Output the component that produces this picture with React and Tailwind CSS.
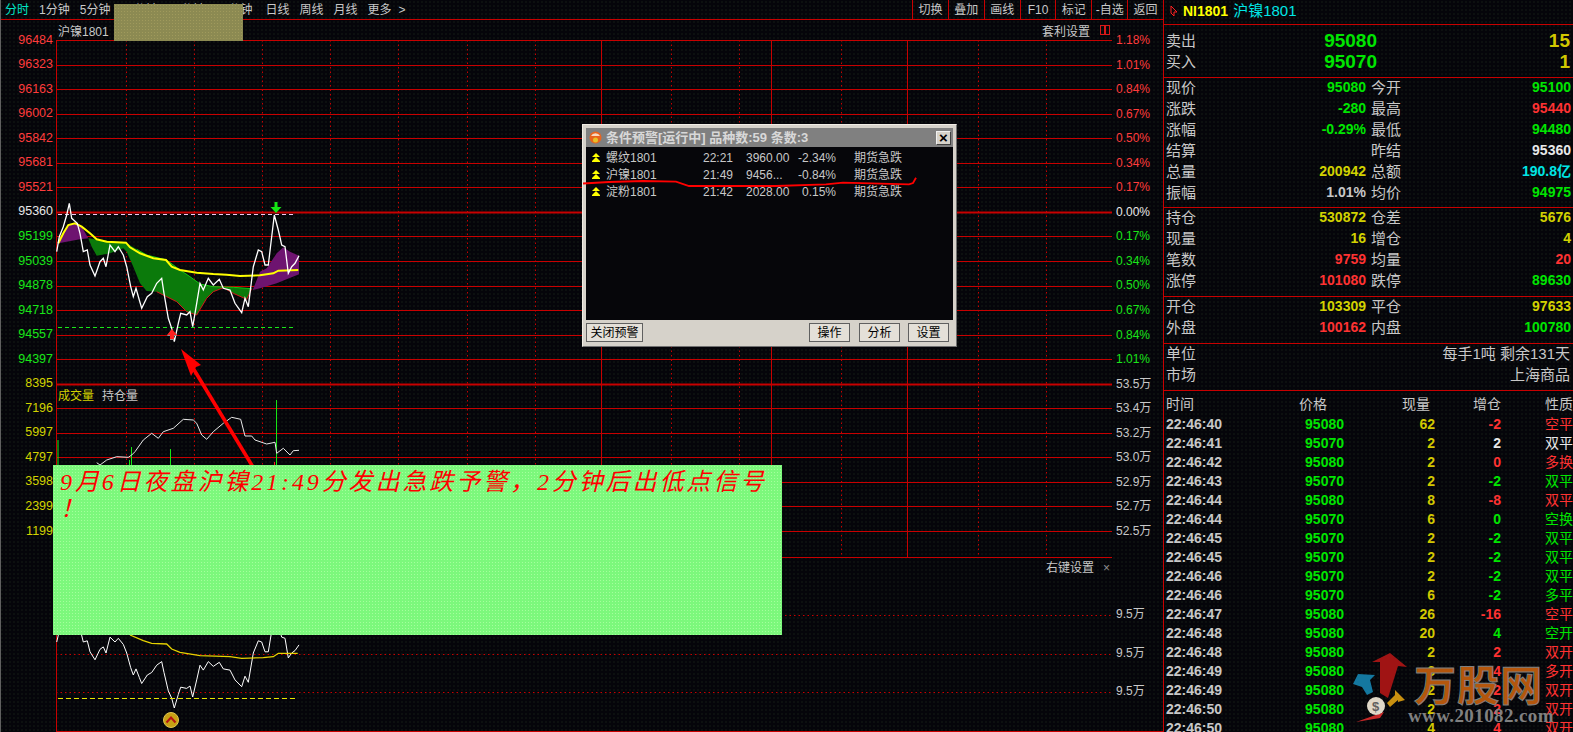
const RED = '#c80000';

const leftAxis = [
  ['96484', 'text-[#ff3c3c]'], ['96323', 'text-[#ff3c3c]'], ['96163', 'text-[#ff3c3c]'], ['96002', 'text-[#ff3c3c]'],
  ['95842', 'text-[#ff3c3c]'], ['95681', 'text-[#ff3c3c]'], ['95521', 'text-[#ff3c3c]'], ['95360', 'text-[#e8e8e8]'],
  ['95199', 'text-[#19e619]'], ['95039', 'text-[#19e619]'], ['94878', 'text-[#19e619]'], ['94718', 'text-[#19e619]'],
  ['94557', 'text-[#19e619]'], ['94397', 'text-[#19e619]'], ['8395', 'text-[#d2d200]'], ['7196', 'text-[#d2d200]'],
  ['5997', 'text-[#d2d200]'], ['4797', 'text-[#d2d200]'], ['3598', 'text-[#d2d200]'], ['2399', 'text-[#d2d200]'],
  ['1199', 'text-[#d2d200]'],
];

const rightAxis = [
  ['1.18%', 'text-[#ff3c3c]'], ['1.01%', 'text-[#ff3c3c]'], ['0.84%', 'text-[#ff3c3c]'], ['0.67%', 'text-[#ff3c3c]'],
  ['0.50%', 'text-[#ff3c3c]'], ['0.34%', 'text-[#ff3c3c]'], ['0.17%', 'text-[#ff3c3c]'], ['0.00%', 'text-[#e8e8e8]'],
  ['0.17%', 'text-[#19e619]'], ['0.34%', 'text-[#19e619]'], ['0.50%', 'text-[#19e619]'], ['0.67%', 'text-[#19e619]'],
  ['0.84%', 'text-[#19e619]'], ['1.01%', 'text-[#19e619]'], ['53.5万', 'text-[#c8c8c8]'], ['53.4万', 'text-[#c8c8c8]'],
  ['53.2万', 'text-[#c8c8c8]'], ['53.0万', 'text-[#c8c8c8]'], ['52.9万', 'text-[#c8c8c8]'], ['52.7万', 'text-[#c8c8c8]'],
  ['52.5万', 'text-[#c8c8c8]'],
];

const G = 'text-[#00e600]';
const R = 'text-[#ff3232]';
const Y = 'text-[#d2d200]';
const W = 'text-[#e8e8e8]';
const S = 'text-[#c8c8c8]';
const C = 'text-[#00e6e6]';

const quoteRows = [
  ['现价', '95080', G, '今开', '95100', G],
  ['涨跌', '-280', G, '最高', '95440', R],
  ['涨幅', '-0.29%', G, '最低', '94480', G],
  ['结算', '', S, '昨结', '95360', W],
  ['总量', '200942', Y, '总额', '190.8亿', C],
  ['振幅', '1.01%', S, '均价', '94975', G],
];
const holdRows = [
  ['持仓', '530872', Y, '仓差', '5676', Y],
  ['现量', '16', Y, '增仓', '4', Y],
  ['笔数', '9759', R, '均量', '20', R],
  ['涨停', '101080', R, '跌停', '89630', G],
];
const openRows = [
  ['开仓', '103309', Y, '平仓', '97633', Y],
  ['外盘', '100162', R, '内盘', '100780', G],
];

const ticks = [
  ['22:46:40', '95080', '62', '-2', '空平', R],
  ['22:46:41', '95070', '2', '2', '双平', W],
  ['22:46:42', '95080', '2', '0', '多换', R],
  ['22:46:43', '95070', '2', '-2', '双平', G],
  ['22:46:44', '95080', '8', '-8', '双平', R],
  ['22:46:44', '95070', '6', '0', '空换', G],
  ['22:46:45', '95070', '2', '-2', '双平', G],
  ['22:46:45', '95070', '2', '-2', '双平', G],
  ['22:46:46', '95070', '2', '-2', '双平', G],
  ['22:46:46', '95070', '6', '-2', '多平', G],
  ['22:46:47', '95080', '26', '-16', '空平', R],
  ['22:46:48', '95080', '20', '4', '空开', G],
  ['22:46:48', '95080', '2', '2', '双开', R],
  ['22:46:49', '95080', '6', '4', '多开', R],
  ['22:46:49', '95080', '2', '2', '双开', R],
  ['22:46:50', '95080', '2', '2', '双开', R],
  ['22:46:50', '95080', '4', '4', '双开', R],
];

const alerts = [
  ['螺纹1801', '22:21', '3960.00', '-2.34%'],
  ['沪镍1801', '21:49', '9456...', '-0.84%'],
  ['淀粉1801', '21:42', '2028.00', '0.15%'],
];

const dotted = [126, 194, 262, 330, 398, 467, 535, 671, 739, 841, 978, 1046];
const solid = [601, 771, 907];

// traced from the reference at 3x, x = px / 3, y = 190 + py / 3
const whitePts = [[170,185],[178,140],[190,110],[200,75],[208,40],[215,85],[232,100],[240,130],[250,185],[262,180],[270,225],[285,258],[300,215],[310,205],[318,230],[330,165],[345,185],[355,170],[370,195],[380,230],[392,290],[400,320],[408,295],[418,330],[425,355],[442,320],[455,310],[470,280],[485,265],[492,310],[505,385],[515,415],[523,455],[535,400],[542,370],[560,375],[570,365],[578,410],[590,340],[600,280],[610,300],[625,265],[640,285],[658,268],[670,295],[690,300],[705,340],[725,368],[735,325],[745,350],[760,230],[775,180],[785,185],[795,225],[805,225],[823,75],[835,120],[845,165],[855,170],[865,250],[875,230],[885,220],[897,197]];
const yellowPts = [[175,160],[190,130],[205,105],[225,100],[245,110],[270,130],[290,148],[320,155],[378,158],[390,172],[420,190],[460,205],[498,210],[515,230],[540,240],[590,248],[640,252],[680,254],[720,258],[780,256],[820,250],[835,242],[895,240]];
const greenArea = [[265,145],[300,150],[378,158],[410,178],[440,195],[500,210],[540,240],[570,260],[600,282],[640,290],[700,292],[755,296],[740,328],[700,310],[670,293],[640,305],[620,325],[590,375],[560,365],[530,335],[500,320],[470,305],[440,303],[420,280],[400,230],[380,185],[370,175],[330,190],[290,197],[275,170]];
const purpleLeft = [[175,160],[190,130],[205,105],[225,100],[245,110],[265,145],[240,148],[200,155]];
const purpleRight = [[758,300],[780,245],[800,235],[830,190],[850,172],[870,185],[897,197],[897,253],[830,280],[780,295]];
const volumePts = [[290,248],[300,255],[320,240],[350,230],[385,232],[395,225],[405,215],[430,180],[455,160],[475,175],[490,155],[520,145],[550,118],[580,120],[590,130],[605,165],[620,178],[640,155],[670,130],[695,112],[722,118],[735,168],[755,168],[765,180],[800,192],[825,187],[830,220],[850,205],[870,225],[880,212],[897,211]];
const lowYellowPts = [[390,45],[430,62],[455,70],[500,72],[515,87],[540,97],[600,107],[690,110],[725,115],[790,113],[820,110],[835,100],[893,100]];

const upper = (pts) => pts.map(([x, y]) => `${(x / 3).toFixed(1)},${(190 + y / 3).toFixed(1)}`).join(' ');
const volume = (pts) => pts.map(([x, y]) => `${(x / 3).toFixed(1)},${(380 + y / 3).toFixed(1)}`).join(' ');
const lowerWhite = (pts) => pts.map(([x, y]) => `${(x / 3).toFixed(1)},${(708 + (190 + y / 3 - 341.7) * 0.733).toFixed(1)}`).join(' ');
const lowerYellow = (pts) => pts.map(([x, y]) => `${(x / 3).toFixed(1)},${(620 + y / 3).toFixed(1)}`).join(' ');

function ChartDrawing() {
  const rows = Array.from({ length: 21 }, (_, i) => Math.round(40 + i * 24.55));
  return (
    <svg className="block w-[1056px] h-[712px]" viewBox="56 20 1056 712" fill="none">
      {dotted.map((x) => (
        <line key={x} x1={x + 0.5} x2={x + 0.5} y1="40" y2="557" stroke={RED} strokeDasharray="1.5 3" />
      ))}
      {solid.map((x) => (
        <line key={x} x1={x + 0.5} x2={x + 0.5} y1="40" y2="557" stroke={RED} />
      ))}
      {rows.map((y, i) => (
        <line key={y} x1="56" x2="1112" y1={y + 0.5} y2={y + 0.5} stroke={RED} strokeWidth={i === 7 || i === 14 ? 2 : 1} />
      ))}
      <line x1="56" x2="1112" y1="557.5" y2="557.5" stroke={RED} />
      {[615, 654, 692].map((y) => (
        <line key={y} x1="56" x2="1112" y1={y + 0.5} y2={y + 0.5} stroke={RED} strokeDasharray="1.5 3" />
      ))}
      <line x1="56.5" x2="56.5" y1="40" y2="732" stroke={RED} />
      <line x1="56" x2="1112" y1="731.5" y2="731.5" stroke={RED} />

      <polygon points={upper(greenArea)} fill="#0b7a0b" />
      <polygon points={upper(purpleLeft)} fill="#6e1470" />
      <polygon points={upper(purpleRight)} fill="#6e1470" />
      <polyline points={upper(greenArea.slice(11, 22))} stroke="#d01818" />
      <polyline points={upper(greenArea.slice(3, 12))} stroke="#10c810" />
      <line x1="58" x2="295" y1="214.5" y2="214.5" stroke="#f0c8f0" strokeDasharray="4 3" />
      <line x1="58" x2="295" y1="327.5" y2="327.5" stroke="#19e619" strokeDasharray="4 3" />
      <polyline points={upper(yellowPts)} stroke="#ffff00" strokeWidth="2" />
      <polyline points={upper(whitePts)} stroke="#ffffff" strokeWidth="1.3" />

      <polygon points="274.5,202 277.5,202 277.5,207 281.5,207 276,213 270.5,207 274.5,207" fill="#14e614" />
      <polygon points="171,330 177,336 174,336 174,340 170,340 170,336 167,336" fill="#909090" />
      <polygon points="172,329 177,335 174,335 174,339 170,339 170,335 167,335" fill="#ff2020" />

      {[[58, 440], [129.5, 460], [131.5, 447], [170.5, 449], [276.5, 400]].map(([x, y]) => (
        <line key={x} x1={x} x2={x} y1={y} y2="470" stroke="#14e614" />
      ))}
      <line x1="274.5" x2="274.5" y1="462" y2="470" stroke="#ff2020" />
      <polyline points={volume(volumePts)} stroke="#e8e8e8" />

      <line x1="193" y1="368" x2="256" y2="472" stroke="#ff0000" strokeWidth="3.6" />
      <polygon points="181,349 201,365 196,367 191,376" fill="#ff0000" />

      <polyline points={lowerWhite(whitePts)} stroke="#ffffff" />
      <polyline points={lowerYellow(lowYellowPts)} stroke="#e6d200" strokeWidth="1.3" />
      <line x1="58" x2="295" y1="698.5" y2="698.5" stroke="#e6e600" strokeDasharray="5 3" />
      <circle cx="171" cy="720" r="7.5" fill="#c8a014" stroke="#e0c850" />
      <path d="M166.5 722.5 L171 717.5 L175.5 722.5" stroke="#b41414" strokeWidth="2" />

      <rect x="1100.5" y="25.5" width="4" height="9" stroke="#d81818" />
      <rect x="1105.5" y="25.5" width="4" height="9" stroke="#d81818" />
    </svg>
  );
}

function InfoRow({ row }) {
  const [l1, v1, c1, l2, v2, c2] = row;
  return (
    <div className="flex h-[21px] items-center">
      <div className="flex w-[200px] justify-between">
        <span className="text-[15px] text-[#c8c8c8]">{l1}</span>
        <span className={`text-[14px] font-bold ${c1}`}>{v1}</span>
      </div>
      <div className="ml-[5px] flex w-[200px] justify-between">
        <span className="text-[15px] text-[#c8c8c8]">{l2}</span>
        <span className={`text-[14px] font-bold ${c2}`}>{v2}</span>
      </div>
    </div>
  );
}

function AlertDialog() {
  return (
    <div className="absolute left-[582px] top-[124px] flex h-[223px] w-[375px] flex-col border border-[#f0ece4] border-r-[#707070] border-b-[#707070] bg-[#d6d2ca] p-[3px]">
      <div className="flex h-[19px] shrink-0 items-center bg-[#808080] pl-[3px] pr-[2px]">
        <svg className="h-[13px] w-[13px] shrink-0" viewBox="0 0 13 13">
          <circle cx="6.5" cy="6.5" r="6" fill="#e8641e" />
          <path d="M2 5 A5 5 0 0 1 11 5 Z" fill="#f8d8c0" />
          <circle cx="6.5" cy="9" r="2.5" fill="#e8c028" />
        </svg>
        <span className="ml-[4px] text-[13px] font-bold whitespace-nowrap text-[#d8d8d8]">条件预警[运行中] 品种数:59 条数:3</span>
        <div className="ml-auto flex h-[14px] w-[15px] items-center justify-center border border-[#f0f0f0] border-r-[#404040] border-b-[#404040] bg-[#d6d2ca] text-[15px] leading-none font-bold text-black">×</div>
      </div>
      <div className="flex-1 bg-[#06060a] pt-[2px] pl-[6px]">
        {alerts.map((a) => (
          <div key={a[0]} className="flex h-[17px] items-center text-[12px] text-[#c8c8c8]">
            <svg className="h-[9px] w-[8px] shrink-0" viewBox="0 0 8 9">
              <path d="M4 0 L8 4 H0 Z M4 4 L8 8 V9 H0 V8 Z" fill="#ffff00" />
            </svg>
            <div className="ml-[6px] grid grid-cols-[97px_43px_49px_41px_1fr] items-center">
              <span>{a[0]}</span>
              <span>{a[1]}</span>
              <span>{a[2]}</span>
              <span className="text-right">{a[3]}</span>
              <span className="pl-[18px]">期货急跌</span>
            </div>
          </div>
        ))}
      </div>
      <div className="flex h-[23px] shrink-0 items-end pb-[1px] text-[12px] text-black">
        <button className="h-[19px] w-[57px] border border-[#606060] bg-[#e4e0d8]">关闭预警</button>
        <button className="ml-auto h-[19px] w-[41px] border border-[#606060] bg-[#e4e0d8]">操作</button>
        <button className="ml-[9px] h-[19px] w-[41px] border border-[#606060] bg-[#e4e0d8]">分析</button>
        <button className="ml-[8px] mr-[4px] h-[19px] w-[41px] border border-[#606060] bg-[#e4e0d8]">设置</button>
      </div>
      <svg className="absolute left-0 top-0 h-[223px] w-[375px]" viewBox="582 124 375 223" fill="none">
        <polyline points="582,182.5 608,181 642,180 675,180.7 688,185 775,185 825,183.3 842,181.7 908,183.3 912,182 915,176.7" stroke="#ff0000" strokeWidth="1.8" />
      </svg>
    </div>
  );
}

function Watermark() {
  return (
    <div className="absolute left-[1350px] top-[650px] h-[82px] w-[223px]">
      <svg className="absolute left-0 top-0 h-[82px] w-[70px]" viewBox="1350 650 70 82">
        <polygon points="1390,653 1407,667 1398,666 1388,698 1380,693 1380,662 1372,662" fill="#a01414" />
        <polygon points="1353,684 1358,674 1375,675 1370,680 1373,692 1367,695 1362,687" fill="#1478a0" />
        <polygon points="1405,700 1395,690 1395,695 1387,703 1390,707 1398,700 1398,702" fill="#c89010" />
        <path d="M1356 722 L1384 712 L1380 718 Z" fill="#c82828" />
        <circle cx="1376" cy="706" r="9" fill="#e0d8c8" />
        <text x="1372" y="711" fontSize="13" fontWeight="bold" fill="#606060" fontFamily="Liberation Sans">$</text>
      </svg>
      <span className="absolute left-[64px] top-[10px] text-[42px] leading-[46px] font-bold tracking-[1px] whitespace-nowrap text-[#b4560c] [-webkit-text-stroke:1px_#808080] font-['Noto_Sans_CJK_SC',sans-serif]">万股网</span>
      <span className="absolute left-[58px] top-[56px] text-[19px] leading-[20px] font-bold tracking-[0.4px] whitespace-nowrap text-[#808080] font-['Liberation_Serif',serif]">www.201082.com</span>
    </div>
  );
}

export default function App() {
  const tabs = ['1分钟', '5分钟', '15分钟', '30分钟', '60分钟'];
  const tabsAfter = ['日线', '周线', '月线', '更多'];
  const tools = ['切换', '叠加', '画线', 'F10', '标记', '-自选', '返回'];

  return (
    <div className="relative flex h-[732px] w-[1573px] overflow-hidden bg-[#05050a] bg-[radial-gradient(circle,#141c16_0.6px,transparent_0.8px)] bg-[size:4px_4px] font-['Liberation_Sans','Noto_Sans_CJK_SC',sans-serif] text-[12px] text-[#c8c8c8]">
      <div className="flex w-[1163px] shrink-0 flex-col border-l border-[#606060]">
        <div className="flex h-[20px] shrink-0 items-center border-b border-[#c80000] pl-[4px]">
          <div className="flex gap-[10px]">
            <span className="text-[#00e6c8]">分时</span>
            {tabs.map((t) => (
              <span key={t}>{t}</span>
            ))}
            <span className="ml-[3px]">{tabsAfter[0]}</span>
            {tabsAfter.slice(1).map((t) => (
              <span key={t}>{t}</span>
            ))}
            <span className="ml-[-3px]">&gt;</span>
          </div>
          <div className="ml-auto flex h-full w-[251px]">
            {tools.map((t) => (
              <div key={t} className="flex flex-1 items-center justify-center border-l border-[#c80000]">{t}</div>
            ))}
          </div>
        </div>

        <div className="flex flex-1">
          <div className="w-[55px] shrink-0 pt-[7.75px] text-[12.5px]">
            {leftAxis.map(([v, c]) => (
              <div key={v} className={`flex h-[24.55px] items-center justify-end pr-[3px] ${c}`}>{v}</div>
            ))}
          </div>

          <div className="relative w-[1056px] shrink-0">
            <ChartDrawing />
            <span className="absolute left-[2px] top-[3px]">沪镍1801</span>
            <span className="absolute left-[986px] top-[3px]">套利设置</span>
            <span className="absolute left-[2px] top-[367px] text-[#d2d200]">成交量</span>
            <span className="absolute left-[46px] top-[367px]">持仓量</span>
            <span className="absolute left-[990px] top-[539px]">右键设置</span>
            <span className="absolute left-[1047px] top-[539px] text-[#909090]">×</span>
          </div>

          <div className="flex-1 border-b border-[#c80000] pt-[7.75px] pl-[4px]">
            {rightAxis.map(([v, c], i) => (
              <div key={i} className={`flex h-[24.55px] items-center ${c}`}>{v}</div>
            ))}
            <div className="mt-[52px]">
              {[0, 1, 2].map((i) => (
                <div key={i} className="flex h-[38.5px] items-center">9.5万</div>
              ))}
            </div>
          </div>
        </div>
      </div>

      <div className="flex w-[410px] shrink-0 flex-col border-l border-[#c80000] pl-[2px]">
        <div className="-ml-[2px] flex h-[25px] shrink-0 items-center border-b border-[#c80000] pb-[2px] pl-[6px]">
          <svg className="h-[12px] w-[8px]" viewBox="0 0 8 12" fill="none">
            <path d="M1 1 L7 7 H4 V11 L1 8 Z" stroke="#ff2020" />
          </svg>
          <span className="ml-[5px] text-[14px] font-bold text-[#ffff00]">NI1801</span>
          <span className="ml-[5px] text-[15px] text-[#00e6e6]">沪镍1801</span>
        </div>

        <div className="flex h-[53px] shrink-0 flex-col justify-center border-b border-[#c80000] -ml-[2px] pl-[2px] pt-[2px]">
          {[['卖出', '95080', '15'], ['买入', '95070', '1']].map(([l, p, n]) => (
            <div key={l} className="flex h-[21px] items-center">
              <span className="text-[15px]">{l}</span>
              <span className="ml-[121px] w-[60px] text-right text-[19px] font-bold text-[#00e600]">{p}</span>
              <span className="ml-auto pr-[3px] text-[19px] font-bold text-[#d2c800]">{n}</span>
            </div>
          ))}
        </div>

        <div className="-ml-[2px] h-[130px] shrink-0 border-b border-[#c80000] pl-[2px]">
          {quoteRows.map((r) => (
            <InfoRow key={r[0]} row={r} />
          ))}
        </div>
        <div className="-ml-[2px] h-[89px] shrink-0 border-b border-[#c80000] pl-[2px]">
          {holdRows.map((r) => (
            <InfoRow key={r[0]} row={r} />
          ))}
        </div>
        <div className="-ml-[2px] h-[47px] shrink-0 border-b border-[#c80000] pl-[2px]">
          {openRows.map((r) => (
            <InfoRow key={r[0]} row={r} />
          ))}
        </div>
        <div className="-ml-[2px] h-[47px] shrink-0 border-b border-[#c80000] pl-[2px] pr-[3px] text-[15px]">
          <div className="flex h-[21px] items-center justify-between">
            <span>单位</span>
            <span>每手1吨 剩余131天</span>
          </div>
          <div className="flex h-[21px] items-center justify-between">
            <span>市场</span>
            <span>上海商品</span>
          </div>
        </div>

        <div className="grid h-[23px] shrink-0 grid-cols-[100px_78px_91px_66px_72px] items-center pt-[3px] text-[14px]">
          <span>时间</span>
          <span className="pr-[17px] text-right">价格</span>
          <span className="pr-[5px] text-right">现量</span>
          <span className="text-right">增仓</span>
          <span className="text-right">性质</span>
        </div>
        {ticks.map((t, i) => (
          <div key={i} className="grid h-[19px] shrink-0 grid-cols-[100px_78px_91px_66px_72px] items-center text-[14px] font-bold">
            <span className="text-[#c8c8c8]">{t[0]}</span>
            <span className="text-right text-[#00e600]">{t[1]}</span>
            <span className="text-right text-[#d2c800]">{t[2]}</span>
            <span className={`text-right ${t[5]}`}>{t[3]}</span>
            <span className={`text-right font-normal ${t[5]}`}>{t[4]}</span>
          </div>
        ))}
      </div>

      <div className="absolute left-[114px] top-[4px] h-[37px] w-[129px] bg-[#8c8a52] bg-[radial-gradient(circle,#a09a5c_0.6px,transparent_0.8px)] bg-[size:3px_3px]" />

      <div className="absolute left-[53px] top-[465px] h-[170px] w-[729px] bg-[#7cf87c] bg-[radial-gradient(circle,#a4ff9c_0.6px,transparent_0.8px)] bg-[size:3px_3px] px-[7px] pt-[4px] font-['Liberation_Serif','Noto_Sans_CJK_SC',serif] text-[24px] leading-[27px] tracking-[2.9px] text-[#ff0000] italic [line-break:anywhere]">
        9月6日夜盘沪镍21:49分发出急跌予警，2分钟后出低点信号！
      </div>

      <AlertDialog />
      <Watermark />
    </div>
  );
}
